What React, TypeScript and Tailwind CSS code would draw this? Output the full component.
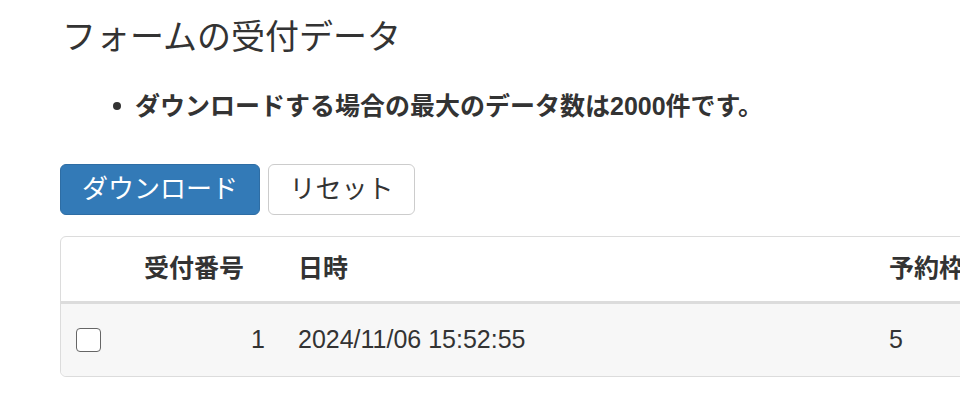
export default function App() {
  const font = { fontFamily: '"Liberation Sans", "Noto Sans CJK JP", sans-serif' };
  return (
    <div
      className="w-[960px] h-[410px] overflow-hidden bg-white text-[#333]"
      style={font}
    >
      <div className="pl-[62px] pt-[16px]">
        <h1 className="text-[34px] leading-[42px] font-normal">フォームの受付データ</h1>
      </div>

      <ul className="mt-[30px] pl-[113px]">
        <li className="flex items-center gap-[14px] text-[25px] leading-[36px] font-bold">
          <span className="w-[8px] h-[8px] rounded-full bg-[#333]" />
          <span>ダウンロードする場合の最大のデータ数は2000件です。</span>
        </li>
      </ul>

      <div className="mt-[40px] ml-[60px] flex gap-[8px]">
        <button className="h-[51px] w-[200px] rounded-[6px] border border-[#2e6da4] bg-[#337ab7] text-[26px] text-white">
          ダウンロード
        </button>
        <button className="h-[51px] w-[147px] rounded-[6px] border border-[#ccc] bg-white text-[26px] text-[#333]">
          リセット
        </button>
      </div>

      <div className="mt-[21px] ml-[60px] w-[1000px] rounded-[6px] border border-[#dcdcdc]">
        <div className="grid grid-cols-[69px_151px_592px_1fr] h-[67px] items-center border-b-[3px] border-[#dcdcdc] text-[25px] font-bold">
          <div />
          <div className="text-right pr-[37px]">受付番号</div>
          <div className="pl-[17px]">日時</div>
          <div className="pl-[16px]">予約枠</div>
        </div>
        <div className="grid grid-cols-[69px_151px_592px_1fr] h-[72px] items-center bg-[#f7f7f7] rounded-b-[6px] text-[25px]">
          <div className="pl-[15px] flex items-center">
            <span className="w-[25px] h-[24px] rounded-[4px] border-[1.5px] border-[#666] bg-white" />
          </div>
          <div className="text-right pr-[16px]">1</div>
          <div className="pl-[17px]">2024/11/06 15:52:55</div>
          <div className="pl-[16px]">5</div>
        </div>
      </div>
    </div>
  );
}
